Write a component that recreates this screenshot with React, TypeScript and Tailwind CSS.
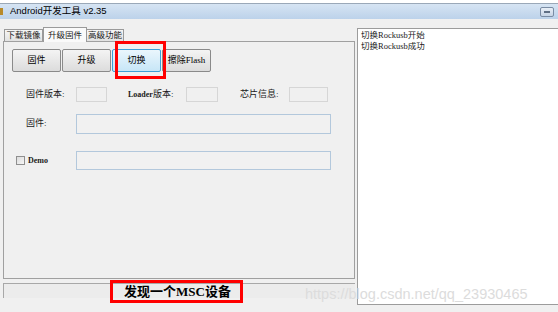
import React from 'react';

const cjk = '"Liberation Serif", "Noto Sans CJK SC", serif';

const Btn = ({ label, active }: { label: string; active?: boolean }) => (
  <div
    className={`w-[49px] h-[23px] rounded-[2px] border flex items-center justify-center text-[9px] text-black ${
      active
        ? 'border-[#3c9fd6] bg-gradient-to-b from-[#eaf6fd] to-[#c7e6f7]'
        : 'border-[#8a8a8a] bg-gradient-to-b from-[#f4f4f4] to-[#dcdcdc]'
    }`}
  >
    {label}
  </div>
);

const Box = ({ w }: { w: string }) => (
  <div className={`${w} h-[15px] border border-[#d6d6d6] bg-[#f0f0f0]`} />
);

export default function App() {
  return (
    <div
      className="relative w-[558px] h-[312px] overflow-hidden bg-[#f0f0f0] text-[#1a1a1a]"
      style={{ fontFamily: cjk }}
    >
      <div className="h-[3px] bg-white" />

      {/* title bar */}
      <div className="h-[16px] border-t border-[#9aa8b8] bg-gradient-to-b from-[#d6e4f3] to-[#bcd2ea] flex items-center">
        <div className="w-[3px] h-[7px] bg-[#b88a2a]" />
        <span
          className="ml-[7px] text-[9.5px] text-black"
          style={{ fontFamily: '"Liberation Sans", "Noto Sans CJK SC", sans-serif' }}
        >
          Android开发工具 v2.35
        </span>
        <div className="ml-auto mr-[4px] w-[14px] h-[10px] rounded-[2px] border border-[#7a8ca4] bg-gradient-to-b from-[#e9eff7] to-[#c6d4e5] flex items-center justify-center">
          <div className="w-[6px] h-[2px] bg-white border border-[#5f6f84]" />
        </div>
      </div>

      <div className="h-[9px]" />

      <div className="flex">
        {/* left side */}
        <div className="pl-[3px] w-[355px] flex flex-col">
          {/* tabs */}
          <div className="h-[13px] flex items-end text-[8.5px]">
            <div className="ml-[1px] w-[39px] h-[12px] border border-b-0 border-[#9a9a9a] bg-gradient-to-b from-[#f6f6f6] to-[#e2e2e2] flex items-center justify-center">
              下载镜像
            </div>
            <div className="relative z-10 -mb-px w-[44px] h-[15px] border border-b-0 border-[#9a9a9a] bg-[#fafafa] flex items-center justify-center">
              升级固件
            </div>
            <div className="w-[37px] h-[12px] border border-b-0 border-l-0 border-[#9a9a9a] bg-gradient-to-b from-[#f6f6f6] to-[#e2e2e2] flex items-center justify-center">
              高级功能
            </div>
          </div>

          {/* panel */}
          <div className="w-[352px] h-[238px] border border-[#a0a0a0] bg-[#f0f0f0] flex flex-col text-[9px]">
            <div className="mt-[7px] ml-[8px] flex gap-[1px]">
              <Btn label="固件" />
              <Btn label="升级" />
              <div className="relative">
                <Btn label="切换" active />
                <div className="absolute left-[3px] -top-[8px] w-[51px] h-[38px] border-[3px] border-[#ff0000]" />
              </div>
              <Btn label="擦除Flash" />
            </div>

            <div className="mt-[15px] ml-[22px] flex items-center h-[15px]">
              <span className="w-[50px]">固件版本:</span>
              <Box w="w-[31px]" />
              <span className="ml-[21px] w-[58px]">
                <span className="text-[8px] font-bold">Loader</span>版本:
              </span>
              <Box w="w-[32px]" />
              <span className="ml-[22px] w-[49px]">芯片信息:</span>
              <Box w="w-[39px]" />
            </div>

            <div className="mt-[12px] ml-[22px] flex items-center">
              <span className="w-[50px]">固件:</span>
              <div className="w-[255px] h-[20px] border border-[#b3c8dc] bg-[#f1f1f1]" />
            </div>

            <div className="mt-[17px] ml-[12px] flex items-center">
              <div className="w-[60px] flex items-center">
                <div className="w-[9px] h-[9px] border border-[#8f8f8f] bg-gradient-to-br from-[#dcdcdc] to-[#f6f6f6]" />
                <span className="ml-[3px] text-[8px] font-bold">Demo</span>
              </div>
              <div className="w-[255px] h-[19px] border border-[#b3c8dc] bg-[#f1f1f1]" />
            </div>
          </div>

          {/* status bar */}
          <div className="relative mt-[4px] w-[352px] h-[15px] border-t border-l border-[#a8a8a8] bg-[#ececec]">
            <div className="absolute left-[106px] -top-[4px] w-[133px] h-[23px] border-[3px] border-[#ff0000] flex items-center justify-center">
              <span className="text-[13px] font-bold text-black ml-[2px]">发现一个MSC设备</span>
            </div>
          </div>
        </div>

        {/* log */}
        <div className="ml-[2px] w-[203px] h-[277px] border border-r-0 border-[#9c9c9c] bg-white pl-[3px] pt-[1px] text-[8.5px] leading-[11px]">
          <div>切换Rockusb开始</div>
          <div>切换Rockusb成功</div>
        </div>
      </div>

      {/* watermark */}
      <div
        className="absolute left-[305px] top-[284px] text-[14.5px] text-[#dcdcdc] whitespace-nowrap"
        style={{ fontFamily: '"Liberation Sans", Arial, sans-serif' }}
      >
        https://blog.csdn.net/qq_23930465
      </div>
    </div>
  );
}
